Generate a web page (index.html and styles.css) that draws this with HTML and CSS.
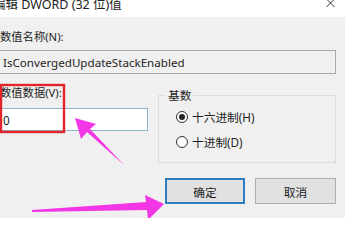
FILE: index.html
```html
<!DOCTYPE html>
<html lang="zh-CN">
<head>
<meta charset="utf-8">
<title>编辑 DWORD (32 位)值</title>
<link rel="stylesheet" href="styles.css">
</head>
<body>
<div class="page">
  <div class="dialog">
    <div class="titlebar">
      <span class="title">编辑 DWORD (32 位)值</span>
      <svg class="close" width="9" height="9" viewBox="0 0 9 9"><path d="M0.5 -1 L8.5 7 M8.5 -1 L0.5 7" stroke="#333" stroke-width="1" fill="none"/></svg>
    </div>
    <div class="content">
      <div class="label first">数值名称(N):</div>
      <div class="field readonly">IsConvergedUpdateStackEnabled</div>
      <div class="row">
        <div class="col">
          <div class="label">数值数据(V):</div>
          <div class="field data">0</div>
        </div>
        <fieldset class="group">
          <legend>基数</legend>
          <div class="option"><span class="radio checked"></span><span>十六进制(H)</span></div>
          <div class="option"><span class="radio"></span><span>十进制(D)</span></div>
        </fieldset>
      </div>
      <div class="buttons">
        <div class="btn default">确定</div>
        <div class="btn">取消</div>
      </div>
    </div>
  </div>
  <svg class="annot" width="360" height="218" viewBox="0 0 360 218">
    <rect x="1" y="85" width="63" height="47" fill="none" stroke="#e2252c" stroke-width="2.4"/>
    <polygon points="75,118 96,124 90,129 124,165 87,132 81,139" fill="#f437e6"/>
    <polygon points="164,204 145,195 146,202 32,210 32,212 147,210 148,220" fill="#f437e6"/>
  </svg>
</div>
</body>
</html>
```
FILE: styles.css
```css
html, body {
  margin: 0;
  padding: 0;
  background: #ffffff;
}
body {
  width: 360px;
  height: 218px;
  overflow: hidden;
  font-family: "Noto Sans", "Noto Sans CJK SC", sans-serif;
  font-size: 11.7px;
  color: #1e1e1e;
}
.page {
  position: relative;
  width: 360px;
  height: 218px;
  overflow: hidden;
}
.dialog {
  margin-left: -12px;
  width: 357px;
  height: 218px;
  background: #f0f0f0;
  box-sizing: border-box;
}
.titlebar {
  height: 17px;
  background: #ffffff;
  display: flex;
  justify-content: space-between;
  align-items: flex-start;
  padding: 0 10px 0 5px;
}
.title {
  font-size: 12.5px;
  line-height: 12px;
  margin-top: -1px;
  color: #222;
}
.close {
  display: block;
}
.content {
  padding: 0 9px 0 11px;
}
.label {
  line-height: 16px;
  padding-left: 1px;
  font-size: 11.3px;
}
.label.first {
  margin-top: 12px;
}
.field {
  box-sizing: border-box;
  border: 1px solid #a9a9a9;
  padding-left: 3px;
  display: flex;
  align-items: center;
}
.field.readonly {
  margin-top: 5px;
  height: 24px;
  background: #f0f0f0;
  font-size: 11.6px;
}
.row {
  display: flex;
  margin-top: 11px;
}
.col {
  width: 149px;
}
.field.data {
  margin-top: 7px;
  height: 23px;
  background: #ffffff;
  border-color: #8fb3cc;
}
.group {
  margin: 4px 0 0 10px;
  width: 178px;
  height: 74px;
  box-sizing: border-box;
  border: 1px solid #dcdcdc;
  padding: 8px 0 0 17px;
}
.group legend {
  padding: 0 2px;
  margin-left: -10px;
  line-height: 12px;
}
.option {
  display: flex;
  align-items: center;
  gap: 4px;
  line-height: 16px;
  height: 16px;
}
.option + .option {
  margin-top: 9px;
}
.radio {
  width: 12px;
  height: 12px;
  box-sizing: border-box;
  border: 1px solid #333;
  border-radius: 50%;
  background: #fff;
  display: flex;
  align-items: center;
  justify-content: center;
}
.radio.checked::after {
  content: "";
  width: 6px;
  height: 6px;
  border-radius: 50%;
  background: #222;
}
.buttons {
  display: flex;
  justify-content: flex-end;
  gap: 10px;
  margin-top: 15px;
}
.btn {
  width: 81px;
  height: 26px;
  box-sizing: border-box;
  border: 1px solid #adadad;
  background: #e1e1e1;
  display: flex;
  align-items: center;
  justify-content: center;
}
.btn.default {
  width: 80px;
  border: 2px solid #2f7cc0;
}
.annot {
  position: absolute;
  left: 0;
  top: 0;
}
```
